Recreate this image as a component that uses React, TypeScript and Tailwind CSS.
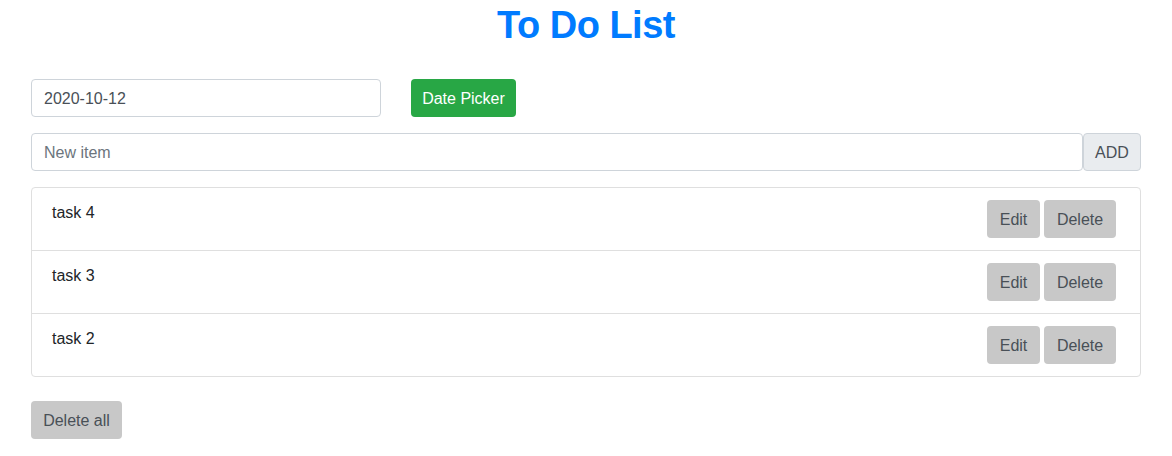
const tasks = ["task 4", "task 3", "task 2"];

const font = "font-['Segoe_UI','Liberation_Sans',Arial,sans-serif]";

export default function App() {
  return (
    <div className={`${font} bg-white text-[#212529] text-base leading-6`}>
      <div className="mx-auto w-[1140px] px-[15px]">
        <h1 className="text-center text-[38px] leading-[50px] font-semibold tracking-[-0.5px] text-[#007bff] mb-[29px]">
          To Do List
        </h1>

        <div className="flex items-center gap-[30px]">
          <input
            defaultValue="2020-10-12"
            className="w-[350px] h-[38px] px-3 pt-[2px] border border-[#ced4da] rounded text-[#495057] outline-none"
          />
          <button className="w-[105px] h-[38px] pt-[2px] rounded bg-[#28a745] text-white">Date Picker</button>
        </div>

        <div className="flex mt-4">
          <input
            placeholder="New item"
            className="flex-1 h-[38px] px-3 pt-[2px] border border-[#ced4da] rounded text-[#495057] placeholder:text-[#6c757d] outline-none"
          />
          <button className="w-[58px] h-[38px] pt-[2px] border border-[#ced4da] rounded bg-[#e9ecef] text-[#495057]">
            ADD
          </button>
        </div>

        <ul className="mt-4 border border-[#dfdfdf] rounded">
          {tasks.map((t, i) => (
            <li
              key={t}
              className={`flex justify-between pl-5 pr-6 py-3 ${i > 0 ? "border-t border-[#dfdfdf]" : ""}`}
            >
              <span className="pt-[1px]">{t}</span>
              <div className="flex gap-1">
                <button className="w-[53px] h-[38px] pt-[2px] rounded bg-[#c8c8c8] text-[#495057]">Edit</button>
                <button className="w-[72px] h-[38px] pt-[2px] rounded bg-[#c8c8c8] text-[#495057]">Delete</button>
              </div>
            </li>
          ))}
        </ul>

        <button className="mt-6 w-[91px] h-[38px] pt-[2px] rounded bg-[#c8c8c8] text-[#495057]">Delete all</button>
      </div>
    </div>
  );
}
